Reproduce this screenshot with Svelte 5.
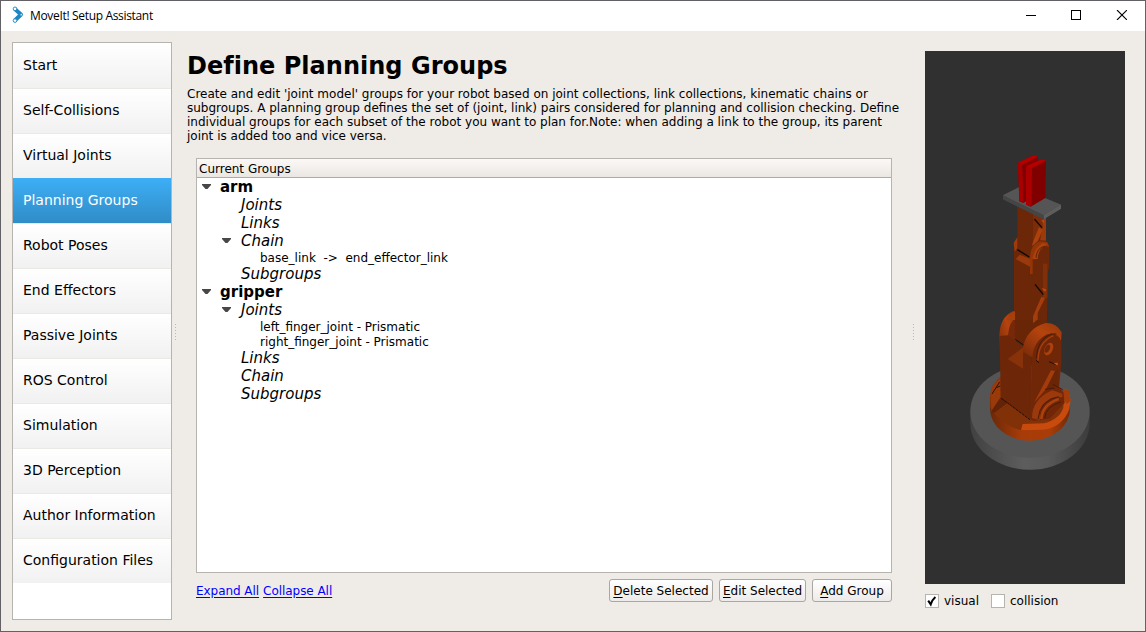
<script>
  const steps = ['Start', 'Self-Collisions', 'Virtual Joints', 'Planning Groups', 'Robot Poses', 'End Effectors', 'Passive Joints', 'ROS Control', 'Simulation', '3D Perception', 'Author Information', 'Configuration Files'];
  let active = $state('Planning Groups');
  let visual = $state(true);
  let collision = $state(false);
  const rows = [
    { kind: 'group', text: 'arm', open: true },
    { kind: 'type', text: 'Joints' },
    { kind: 'type', text: 'Links' },
    { kind: 'type', text: 'Chain', open: true },
    { kind: 'leaf', text: 'base_link  ->  end_effector_link' },
    { kind: 'type', text: 'Subgroups' },
    { kind: 'group', text: 'gripper', open: true },
    { kind: 'type', text: 'Joints', open: true },
    { kind: 'leaf', text: 'left_finger_joint - Prismatic' },
    { kind: 'leaf', text: 'right_finger_joint - Prismatic' },
    { kind: 'type', text: 'Links' },
    { kind: 'type', text: 'Chain' },
    { kind: 'type', text: 'Subgroups' }
  ];
</script>

{#snippet check(on)}
  <span class="box">
    {#if on}
      <svg width="12" height="12" viewBox="0 0 12 12"><path d="M2.2 5.6 L4.7 9.4 Q6 5 9.4 2" fill="none" stroke="#000" stroke-width="2" /></svg>
    {/if}
  </span>
{/snippet}

<div class="window">
  <header class="titlebar">
    <svg class="logo" width="12" height="18" viewBox="0 0 12 18">
      <path d="M2.8 3 L9 8.5 L2.8 14.5" fill="none" stroke="#1d87c2" stroke-width="4" stroke-linejoin="round" />
      <circle cx="3" cy="2.8" r="1.8" fill="#fff" stroke="#2b8fc6" />
      <circle cx="9.2" cy="8.7" r="1" fill="#fff" stroke="#2b8fc6" stroke-width=".6" />
      <circle cx="3" cy="14.6" r="1.8" fill="#fff" stroke="#2b8fc6" />
    </svg>
    <span class="title">MoveIt! Setup Assistant</span>
    <svg class="controls" width="101" height="10" viewBox="0 0 101 10" fill="none" stroke="#000">
      <path d="M0 5.5 H10" />
      <rect x="45.5" y=".5" width="9" height="9" />
      <path d="M91 0 L101 10 M101 0 L91 10" stroke-width="1.1" />
    </svg>
  </header>

  <div class="body">
    <nav class="steps">
      {#each steps as s}
        <button class="step" class:active={s === active} onclick={() => (active = s)}>{s}</button>
      {/each}
    </nav>
    <div class="grip"></div>

    <main>
      <h1>Define Planning Groups</h1>
      <p>Create and edit 'joint model' groups for your robot based on joint collections, link collections, kinematic chains or<br />subgroups. A planning group defines the set of (joint, link) pairs considered for planning and collision checking. Define<br />individual groups for each subset of the robot you want to plan for.Note: when adding a link to the group, its parent<br />joint is added too and vice versa.</p>
      <section class="tree">
        <div class="head">Current Groups</div>
        {#each rows as r}
          <div class="row {r.kind}">
            <span class="arrow">{#if r.open}<svg width="9" height="5" viewBox="0 0 9 5"><path d="M0 0 H9 V1 L5.5 5 H3.5 L0 1Z" fill="#474747" /></svg>{/if}</span>
            <span class="label">{r.text}</span>
          </div>
        {/each}
      </section>
      <div class="actions">
        <a href="#expand">Expand All</a>
        <a href="#collapse">Collapse All</a>
        <span class="fill"></span>
        <button class="btn del"><u>D</u>elete Selected</button>
        <button class="btn edit"><u>E</u>dit Selected</button>
        <button class="btn add"><u>A</u>dd Group</button>
      </div>
    </main>
    <div class="grip right"></div>

    <aside>
      <svg class="view" width="200" height="533" viewBox="925 51 200 533">
        <defs>
          <linearGradient id="rim"><stop offset="0" stop-color="#414141" /><stop offset=".45" stop-color="#5d5d5d" /><stop offset=".65" stop-color="#585858" /><stop offset="1" stop-color="#3c3c3c" /></linearGradient>
          <linearGradient id="ring"><stop offset="0" stop-color="#6b2808" /><stop offset=".4" stop-color="#a83c08" /><stop offset=".75" stop-color="#a93d08" /><stop offset="1" stop-color="#74290a" /></linearGradient>
          <linearGradient id="shoulder" x1="0" y1="1" x2="1" y2="0"><stop offset="0" stop-color="#78290a" /><stop offset=".6" stop-color="#b5440e" /><stop offset="1" stop-color="#963809" /></linearGradient>
        </defs>
        <rect x="925" y="51" width="200" height="533" fill="#303030" />
        <!-- base and lower arm -->
        <g transform="translate(950 310) scale(.333333)">
          <path d="M61 302 V340 A179 139 0 0 0 419 340 V302Z" fill="url(#rim)" />
          <ellipse cx="240" cy="304" rx="179" ry="139" fill="#555" />
          <path d="M120 262 V296 A120 96 0 0 0 360 296 V262Z" fill="url(#ring)" />
          <path d="M120 262 Q124 218 151 202 L318 222 L360 265 Q350 305 330 323 Q295 359 213 361 Q145 340 120 290Z" fill="#813108" />
          <path d="M121 250 Q128 215 151 205 V262 L124 304Z" fill="#9a3a0a" />
          <path d="M124 304 L153 261 L175 277 L132 309Z" fill="#622309" />
          <path d="M126 252 L149 216 M139 233 L151 228" stroke="#2d1206" stroke-width="3" />
          <path d="M218 342 L282 340 Q330 326 340 293 L342 236 L354 239 L362 269 L358 298 Q335 354 279 359 L213 361Z" fill="#c84b0d" />
          <path d="M340 237 L355 240 L362 272 L350 282 L339 260Z" fill="#a23c0a" />
          <path d="M148 78 Q149 22 189 4 L196 2 V110 L151 130Z" fill="url(#shoulder)" />
          <path d="M174 76 Q177 38 196 25 V100 L174 113Z" fill="#75290a" />
          <path d="M148 78 L174 76 L222 112 L245 139 V330 L153 264Z" fill="#6d2708" />
          <path d="M173 147 L219 112 V176Z" fill="#873209" />
          <path d="M195 0 H291 V82 L224 112 L195 88Z" fill="#692607" />
          <path d="M267 0 L249 19 V40 L263 28Z" fill="#a33e0c" />
          <path d="M196 88 L225 108" stroke="#1f0c03" stroke-width="3" />
          <path d="M245 139 Q247 91 288 67 Q331 55 334 82 V160 L327 232 L289 325 L245 330Z" fill="#702708" />
          <path d="M219 110 Q233 54 287 39 Q319 38 335 67 L333 92 Q322 66 292 73 Q251 92 247 142 L219 125Z" fill="url(#shoulder)" />
          <path d="M259 145 Q261 89 303 72 L319 72" fill="none" stroke="#481a07" stroke-width="3" />
          <path d="M264 152 Q264 97 310 77" fill="none" stroke="#a83e0c" stroke-width="4" />
          <ellipse cx="296" cy="117" rx="12" ry="20" transform="rotate(25 296 117)" fill="#ad410d" />
          <ellipse cx="292" cy="116" rx="7" ry="13" transform="rotate(25 292 116)" fill="#702708" />
          <path d="M297 155 L323 166 M258 151 L267 158" stroke="#210c03" stroke-width="3" />
          <path d="M311 159 L323 158 V168Z" fill="#d34d09" />
          <path d="M303 181 L315 183 L283 247 L252 278 L267 250Z" fill="#a33b0b" />
          <path d="M317 183 L290 236 L326 225 V178Z" fill="#6a2507" />
          <path d="M252 278 L286 239 L319 229 L340 247 L344 279 L299 326 L249 333 L245 326Z" fill="#712707" />
          <path d="M246 324 Q246 267 307 241 L337 251 V262 Q299 255 274 290 Q267 310 269 330Z" fill="#9b390c" />
          <path d="M264 327 Q270 270 326 260" fill="none" stroke="#4c1b07" stroke-width="3" />
          <path d="M274 327 Q276 285 326 267" fill="none" stroke="#ab410d" stroke-width="8" />
          <path d="M284 325 Q286 290 333 276" fill="none" stroke="#4a1a07" stroke-width="3" />
          <path d="M309 223 L338 239 M285 238 L314 234" stroke="#481a07" stroke-width="3" />
          <path d="M154 265 L240 329" stroke="#210b02" stroke-width="3" stroke-dasharray="9 2" />
        </g>
        <!-- upper arm, wrist plate and gripper fingers -->
        <g transform="translate(950 140) scale(.333333)">
          <path d="M192 305 L202 292 V201 H288 V304 L298 320 V381 L294 395 L291 540 H195 L192 510Z" fill="#6b2707" />
          <path d="M191 309 L202 292 V324 L194 335Z" fill="#9e3b0c" />
          <path d="M249 215 H279 V265 L249 310Z" fill="#7c2d08" />
          <path d="M278 229 H288 V302 L270 301 L278 260Z" fill="#9c3a0b" />
          <path d="M278 270 L264 303 L245 319 L250 303 L267 262Z" fill="#ab420e" />
          <path d="M253 237 L276 263 M202 329 L238 351" stroke="#120702" stroke-width="4" />
          <path d="M273 240 L282 241 V251Z" fill="#b84711" />
          <path d="M197 357 L209 344 L240 356 V380Z" fill="#9a390b" />
          <path d="M240 349 Q242 315 269 304 L292 306 L298 321 Q268 310 248 357 V402 H240Z" fill="#943508" />
          <path d="M248 358 Q251 326 278 309 L293 312 Q263 326 263 357Z" fill="#ac410e" />
          <path d="M258 353 Q260 323 285 319" fill="none" stroke="#5d2107" stroke-width="3" />
          <path d="M279 371 H292 V474 H279Z" fill="#803008" />
          <path d="M255 433 L280 464" stroke="#120702" stroke-width="4" />
          <path d="M275 444 L288 448 V454 L281 452Z" fill="#bc4710" />
          <path d="M274 470 L285 475 L263 519 L263 540 H249 V529Z" fill="#a33d0c" />
          <path d="M169 540 L188 517 L195 514 V540Z" fill="#a8400e" />
          <path d="M159 166 L206 142 L333 194 V206 L281 238 L159 178Z" fill="#484848" />
          <path d="M159 166 L206 142 L333 194 L281 226Z" fill="#555" />
          <path d="M281 226 L333 194 V206 L281 238Z" fill="#5e5e5e" />
          <path d="M159 166 L281 226 V238 L159 178Z" fill="#454545" />
          <path d="M204 68 L252 45 L264 50 V165 L219 189 L208 184Z" fill="#850000" />
          <path d="M204 68 L252 45 L264 50 L217 74Z" fill="#b60000" />
          <path d="M204 68 L217 74 L222 187 L208 184Z" fill="#a80000" />
          <path d="M217 74 L229 69 V182 L221 187Z" fill="#800000" />
          <path d="M228 79 L276 57 L288 63 L286 174 L242 200 L228 194Z" fill="#800000" />
          <path d="M228 79 L276 57 L288 63 L244 85Z" fill="#b60000" />
          <path d="M228 79 L246 84 L244 199 L228 194Z" fill="#ac0000" />
        </g>
      </svg>
      <div class="checks">
        <button class="chk" onclick={() => (visual = !visual)}>{@render check(visual)}visual</button>
        <button class="chk" onclick={() => (collision = !collision)}>{@render check(collision)}collision</button>
      </div>
    </aside>
  </div>
</div>

<style>
  :global(body) { margin: 0; }
  * { box-sizing: border-box; }
  button { font: inherit; color: inherit; border: 0; padding: 0; margin: 0; background: none; }
  .window { width: 1146px; height: 632px; border: 1px solid #626166; background: #efebe7; font: 12px/14px "DejaVu Sans", sans-serif; color: #000; display: flex; flex-direction: column; overflow: hidden; }
  .titlebar { height: 30px; background: #fff; display: flex; align-items: center; padding: 0 18px 0 11px; flex: none; }
  .title { font: 12px/16px "Open Sans", sans-serif; letter-spacing: -.33px; margin-left: 6px; flex: 1; white-space: nowrap; }
  .logo { margin-bottom: 2px; }
  .controls { margin-bottom: 2px; }
  .body { flex: 1; display: flex; padding: 11px 20px 11px 11px; min-height: 0; }
  .steps { width: 160px; height: 578px; background: #fff; border: 1px solid #b7b3af; display: flex; flex-direction: column; flex: none; }
  .step { height: 45px; flex: none; text-align: left; padding: 0 0 2px 10px; font-size: 14px; background: linear-gradient(#fff, #f1f1f1); border-top: 1px solid #ebe9e4; white-space: nowrap; }
  .step:first-child { border-top-color: #fff; }
  .step.active { color: #fff; background: linear-gradient(#3daef5, #308cc6); border-top-color: #3daef5; }
  .grip { width: 1px; height: 17px; margin: 282px 11px 0 3px; background: repeating-linear-gradient(#bbb7b3 0 1px, transparent 1px 3px); flex: none; }
  .grip.right { margin: 282px 11px 0 13px; }
  main { width: 713px; flex: none; display: flex; flex-direction: column; }
  h1 { font-size: 24px; line-height: 28px; margin: 10px 0 0 0; white-space: nowrap; letter-spacing: .02px; }
  p { margin: 7px 0 0; white-space: nowrap; }
  .tree { margin: 15px 0 0 9px; width: 696px; height: 415px; border: 1px solid #b7b3af; background: #fff; }
  .head { height: 19px; line-height: 20px; padding-left: 2px; background: linear-gradient(#fbf8f6, #eae7e3); border-bottom: 1px solid #aeaba7; }
  .row { height: 18px; display: flex; align-items: center; white-space: pre; font-size: 15px; line-height: 18px; }
  .arrow { width: 18px; height: 5px; display: flex; margin: 0 0 2px 5px; }
  .type { font-style: italic; padding-left: 20px; }
  .type .label { padding-left: 1px; }
  .group { font-weight: bold; }
  .leaf { font-size: 12px; height: 15px; line-height: 15px; padding: 2px 0 0 40px; }
  .actions { display: flex; align-items: center; margin: 6px 7px 0 9px; height: 23px; width: 696px; }
  a { color: #0000ff; margin-right: 4px; letter-spacing: -.05px; text-underline-offset: 2px; }
  .fill { flex: 1; }
  .btn { height: 23px; border: 1px solid #aaa6a3; border-radius: 3px; background: linear-gradient(#fff, #edebe9); margin-left: 6px; white-space: nowrap; }
  .btn u { text-underline-offset: 2px; }
  .del { width: 104px; }
  .edit { width: 87px; }
  .add { width: 80px; }
  aside { width: 200px; margin-top: 9px; flex: none; }
  .view { display: block; }
  .checks { display: flex; margin-top: 9px; gap: 12px; }
  .chk { display: flex; align-items: center; height: 15px; }
  .box { width: 14px; height: 14px; border: 1px solid #b7b3af; background: #fff; margin-right: 5px; }
  .box svg { display: block; }
</style>
